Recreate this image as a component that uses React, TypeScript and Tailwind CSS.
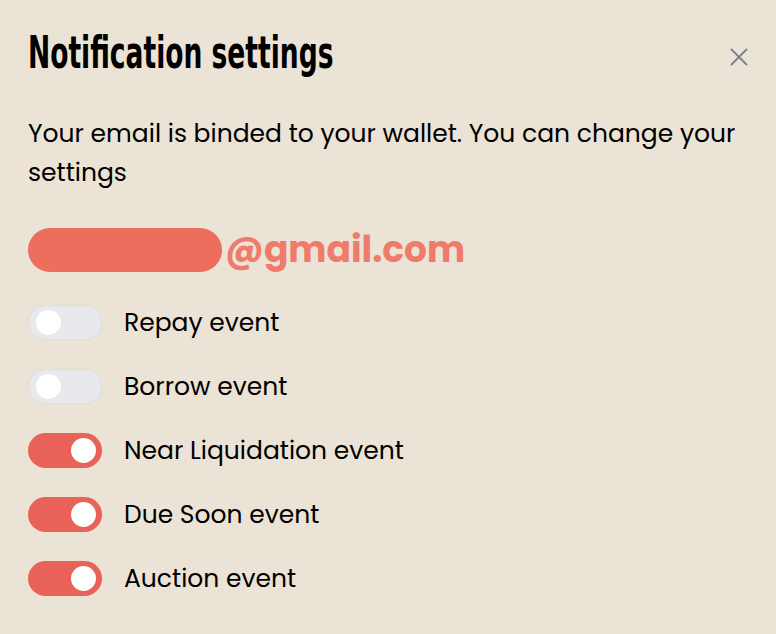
import { useState } from "react";

type Setting = { key: string; label: string; on: boolean };

const initial: Setting[] = [
  { key: "repay", label: "Repay event", on: false },
  { key: "borrow", label: "Borrow event", on: false },
  { key: "liquidation", label: "Near Liquidation event", on: true },
  { key: "due", label: "Due Soon event", on: true },
  { key: "auction", label: "Auction event", on: true },
];

const Toggle = ({ on, onClick }: { on: boolean; onClick: () => void }) => (
  <button
    onClick={onClick}
    className={`flex h-[35px] w-[74px] shrink-0 items-center rounded-full px-[6px] ${
      on
        ? "justify-end bg-[#e8625a]"
        : "justify-start border border-[#dcdde2] bg-[#e8e9ed] pl-[7px]"
    }`}
  >
    <span className="block h-[25px] w-[25px] rounded-full bg-white" />
  </button>
);

export default function App() {
  const [settings, setSettings] = useState(initial);

  const flip = (key: string) =>
    setSettings((s) => s.map((x) => (x.key === key ? { ...x, on: !x.on } : x)));

  return (
    <main className="min-h-[634px] w-[776px] bg-[#ebe3d5] px-7 pt-[28px] font-['Poppins','Inter',sans-serif] text-black">
      <div className="flex items-start justify-between">
        {/* tall narrow display heading */}
        <h1 className="origin-left scale-x-[0.67] whitespace-nowrap font-['DejaVu_Sans',sans-serif] text-[44px] font-bold leading-[50px] font-stretch-condensed">
          Notification settings
        </h1>
        <button className="mr-[-2px] mt-[18px] text-[#7b8189]">
          <svg width="22" height="22" viewBox="0 0 22 22" fill="none">
            <path d="M3 3L19 19M19 3L3 19" stroke="currentColor" strokeWidth="1.8" />
          </svg>
        </button>
      </div>

      <p className="mt-[36px] text-[25px] leading-[39px]">
        Your email is binded to your wallet. You can change your settings
      </p>

      <div className="mt-[36px] flex items-center">
        <div className="h-[44px] w-[194px] rounded-full bg-[#ee6e5d]" />
        <span className="ml-[3px] text-[36px] font-bold leading-none text-[#ef7b6b]">
          @gmail.com
        </span>
      </div>

      <div className="mt-[33px] flex flex-col gap-[29px]">
        {settings.map((s) => (
          <div key={s.key} className="flex items-center gap-[22px]">
            <Toggle on={s.on} onClick={() => flip(s.key)} />
            <span className="text-[25px] leading-none">{s.label}</span>
          </div>
        ))}
      </div>
    </main>
  );
}
